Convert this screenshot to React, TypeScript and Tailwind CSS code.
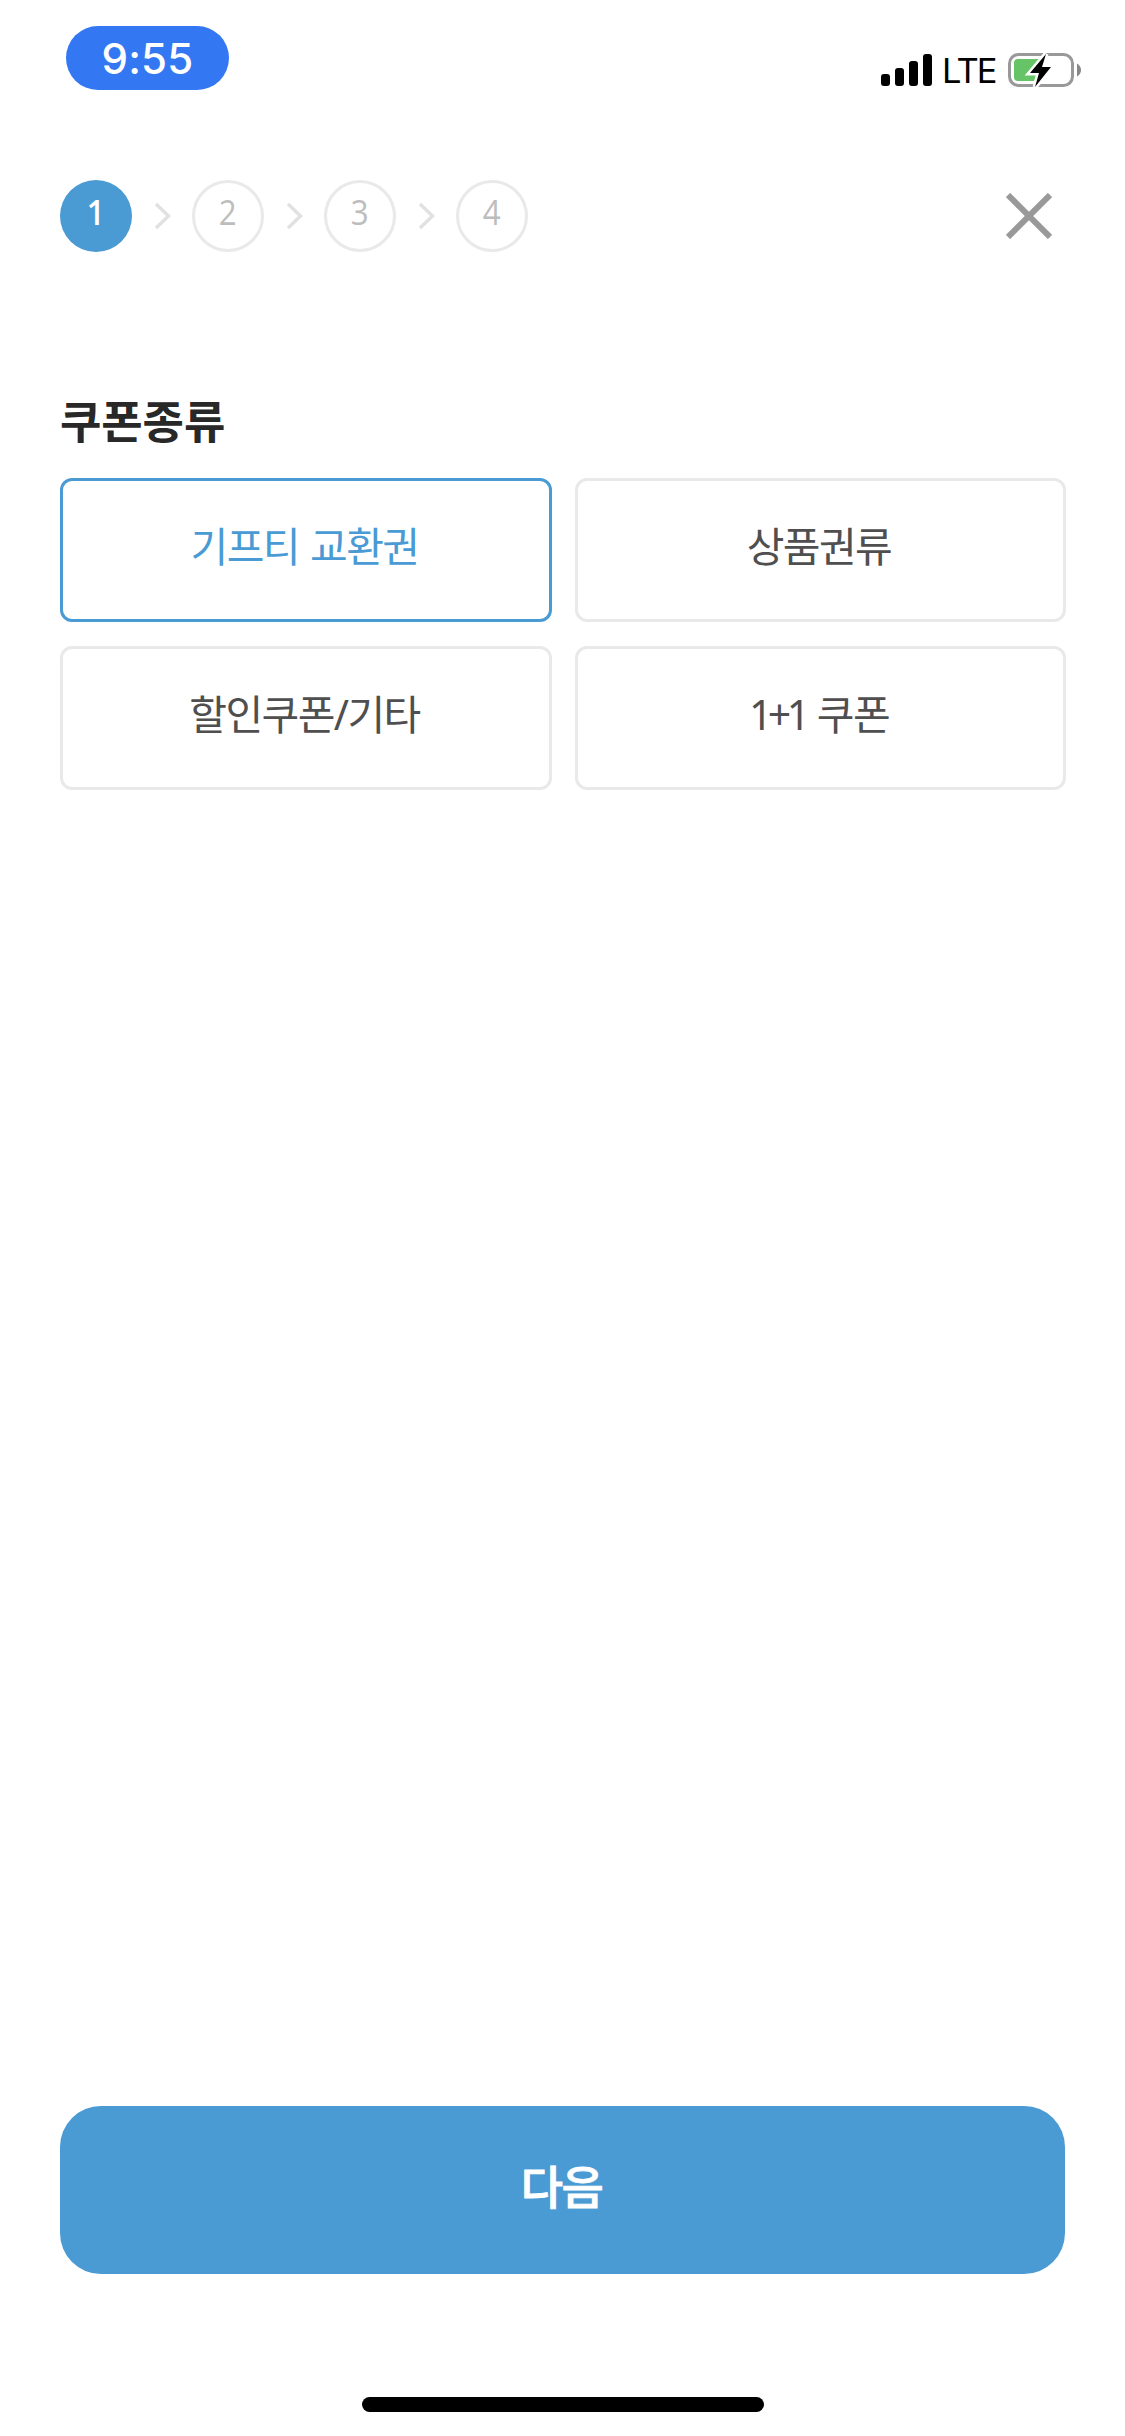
import { useState } from "react";
import clsx from "clsx";

const steps = [1, 2, 3, 4];

interface CouponType {
  prefix?: string;
  label: string;
}

const couponTypes: CouponType[] = [
  { label: "기프티 교환권" },
  { label: "상품권류" },
  { label: "할인쿠폰/기타" },
  { prefix: "1+1", label: " 쿠폰" },
];

function StatusBar() {
  return (
    <div className="h-[150px] pl-[66px] pr-[43px] pt-[26px] flex items-start justify-between font-['Inter',sans-serif]">
      <div className="w-[163px] h-16 rounded-[32px] bg-[#3377f3] flex items-center justify-center pt-0.5">
        <span className="text-white text-[42px] leading-none font-medium tracking-[0.2px]">9:55</span>
      </div>

      <div className="flex items-center pt-[26px]">
        {/* Signal */}
        <svg className="w-[51px] h-8" viewBox="0 0 51 32">
          <rect x="0" y="20" width="9" height="12" rx="3" />
          <rect x="14" y="14" width="9" height="18" rx="3" />
          <rect x="28" y="7" width="9" height="25" rx="3" />
          <rect x="42" y="0" width="9" height="32" rx="3" />
        </svg>
        <span className="ml-2.5 w-[54px] text-[34.5px] leading-[34px] mt-0.5 whitespace-nowrap tracking-[-1.8px]">LTE</span>
        {/* Battery, charging */}
        <svg className="w-[74px] h-[34px] ml-3" viewBox="0 0 74 34">
          <rect x="1.5" y="1.5" width="63" height="31" rx="9" fill="none" stroke="#999" strokeWidth="3" />
          <path d="M10 6H33V28H10Q6 28 6 24V10Q6 6 10 6Z" fill="#66c466" />
          <path d="M69 10.5Q73 13 73 17T69 23.5Z" fill="#888" />
          <path d="M38 1 L22 20 H31 L27 34 L43 14 H34Z" fill="#000" stroke="#fff" strokeWidth="5" paintOrder="stroke" />
        </svg>
      </div>
    </div>
  );
}

function Header({ current }: { current: number }) {
  return (
    <header className="h-[132px] px-[60px] flex items-center justify-between">
      <div className="flex items-center">
        {steps.map((n) => (
          <div key={n} className="flex items-center">
            {n > 1 && (
              <svg className="w-[60px] h-[30px]" viewBox="0 0 60 30" fill="none" stroke="#e1e1e1" strokeWidth="3.5">
                <path d="M24 3 L36.5 15 L24 27" />
              </svg>
            )}
            <div
              className={clsx(
                "w-[72px] h-[72px] rounded-full flex items-center justify-center pb-2 text-[34px] leading-none font-['Open_Sans',sans-serif]",
                n === current ? "bg-[#4a9ad4] text-white font-semibold" : "border-3 border-[#e9e9e9] text-[#bdbdbd] font-normal"
              )}
            >
              <span className="scale-x-92">{n}</span>
            </div>
          </div>
        ))}
      </div>
      <button aria-label="닫기" className="mr-[13px]">
        <svg className="w-[46px] h-[46px]" viewBox="0 0 46 46" stroke="#999" strokeWidth="6">
          <path d="M2 2 L44 44 M44 2 L2 44" />
        </svg>
      </button>
    </header>
  );
}

export default function App() {
  const [selected, setSelected] = useState(0);

  return (
    <div className="w-[1125px] h-[2436px] bg-white flex flex-col font-['Noto_Sans','Noto_Sans_CJK_KR',sans-serif]">
      <StatusBar />
      <Header current={1} />

      {/* Coupon type */}
      <main className="flex-1 px-[60px] pt-[105px]">
        <h1 className="h-[91px] text-[45px] leading-[70px] font-bold tracking-[-0.1px] text-[#282828]">쿠폰종류</h1>
        <div className="grid grid-cols-[492px_491px] gap-x-[23px] gap-y-6">
          {couponTypes.map(({ prefix, label }, i) => (
            <button
              key={label}
              onClick={() => setSelected(i)}
              className={clsx(
                "h-36 rounded-xl border-3 pb-2 pr-[3px] text-[41px] leading-[60px] tracking-[-1.6px] [word-spacing:2px]",
                selected === i ? "border-[#4a9ad4] text-[#4a9ad4]" : "border-[#e9e9e9] text-[#4f4f4f]"
              )}
            >
              {prefix && <span className="tracking-[-4.5px]">{prefix}</span>}
              {label}
            </button>
          ))}
        </div>
      </main>

      <footer className="px-[60px] pb-6 flex flex-col items-center">
        <button className="w-full h-[168px] rounded-[41px] bg-[#4a9ad4] pb-2 pr-[2px] text-white text-[46px] leading-[70px] font-medium tracking-[-1.6px] [-webkit-text-stroke:0.8px_white]">
          다음
        </button>
        <div className="mt-[123px] w-[402px] h-[15px] rounded-full bg-black" />
      </footer>
    </div>
  );
}
